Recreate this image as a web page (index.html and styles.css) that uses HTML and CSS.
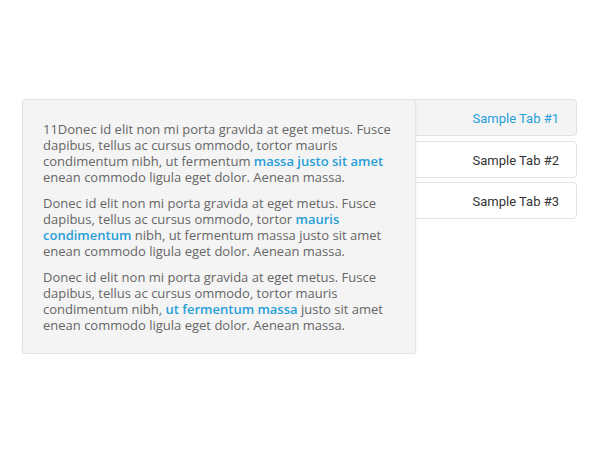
FILE: index.html
```html
<!DOCTYPE html>
<html>
<head>
<meta charset="utf-8">
<link rel="stylesheet" href="styles.css">
</head>
<body>
<div class="tabs">
  <div class="panel">
    <p>11Donec id elit non mi porta gravida at eget metus. Fusce dapibus, tellus ac cursus ommodo, tortor mauris condimentum nibh, ut fermentum <a class="link">massa justo sit amet</a> enean commodo ligula eget dolor. Aenean massa.</p>
    <p>Donec id elit non mi porta gravida at eget metus. Fusce dapibus, tellus ac cursus ommodo, tortor <a class="link">mauris condimentum</a> nibh, ut fermentum massa justo sit amet enean commodo ligula eget dolor. Aenean massa.</p>
    <p>Donec id elit non mi porta gravida at eget metus. Fusce dapibus, tellus ac cursus ommodo, tortor mauris condimentum nibh, <a class="link">ut fermentum massa</a> justo sit amet enean commodo ligula eget dolor. Aenean massa.</p>
  </div>
  <div class="tab-list">
    <div class="tab active">Sample Tab #1</div>
    <div class="tab">Sample Tab #2</div>
    <div class="tab">Sample Tab #3</div>
  </div>
</div>
</body>
</html>
```

FILE: styles.css
```css
html, body {
  margin: 0;
  background: #ffffff;
}
body {
  padding: 99px 23px 0 22px;
}
.tabs {
  display: flex;
  align-items: flex-start;
  width: 555px;
}
.panel {
  position: relative;
  z-index: 2;
  flex: 0 0 394px;
  box-sizing: border-box;
  background: #f4f4f4;
  border: 1px solid #e2e2e2;
  border-radius: 4px;
  box-shadow: 0 1px 2px rgba(0, 0, 0, 0.08);
  padding: 21px 19px 10px 20px;
  font-family: "Open Sans", sans-serif;
  font-size: 13px;
  line-height: 16px;
  color: #666666;
}
.panel p {
  margin: 0 0 10px;
}
.link {
  color: #279fd8;
  font-weight: 600;
}
.tab-list {
  flex: 1 1 auto;
  margin-left: -40px;
  display: flex;
  flex-direction: column;
  gap: 4.5px;
}
.tab {
  box-sizing: border-box;
  height: 37px;
  display: flex;
  align-items: center;
  justify-content: flex-end;
  padding: 2px 17px 0 0;
  border: 1px solid #e2e2e2;
  border-radius: 4px;
  background: #ffffff;
  font-family: Roboto, sans-serif;
  font-size: 13px;
  color: #333333;
}
.tab.active {
  background: #f4f4f4;
  color: #279fd8;
}
```
